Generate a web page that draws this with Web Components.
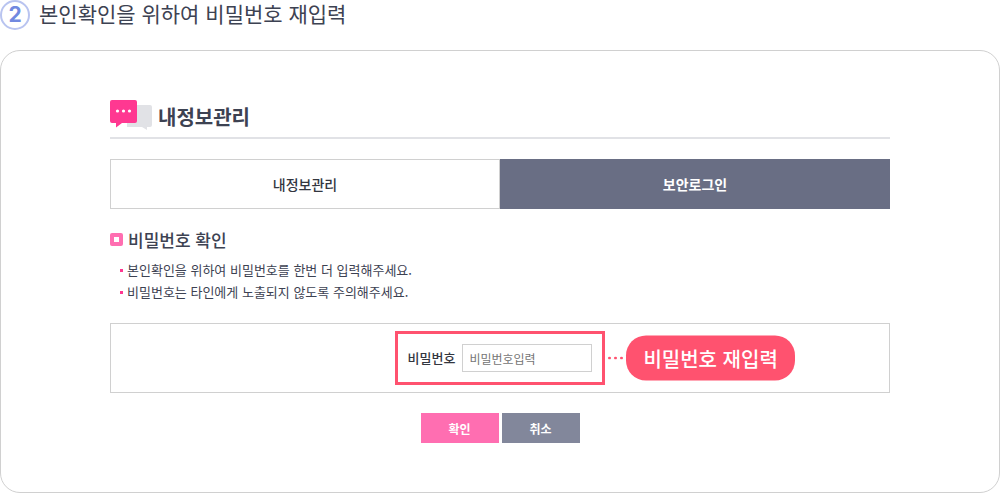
<!DOCTYPE html>
<html lang="ko">
<head>
<meta charset="utf-8">
<meta name="viewport" content="width=device-width, initial-scale=1">
<title>내정보관리</title>
<style>
  body {
    margin: 0;
    background: #fff;
    color: #3d4252;
    font-family: "Noto Sans CJK KR", "Noto Sans", sans-serif;
    font-size: 13px;
  }
</style>
</head>
<body>

<guide-step number="2">
  <span slot="title">본인확인을 위하여 비밀번호 재입력</span>
  <page-title>내정보관리</page-title>
  <tab-menu>
    <tab-item href="#info">내정보관리</tab-item>
    <tab-item href="#login" active>보안로그인</tab-item>
  </tab-menu>
  <notice-list>
    <span slot="title">비밀번호 확인</span>
    <notice-item>본인확인을 위하여 비밀번호를 한번 더 입력해주세요.</notice-item>
    <notice-item>비밀번호는 타인에게 노출되지 않도록 주의해주세요.</notice-item>
  </notice-list>
  <password-form></password-form>
</guide-step>

<script>
  // Base class: clones the template markup into an open shadow root
  class BaseElement extends HTMLElement {
    constructor() {
      super();
      this.attachShadow({ mode: 'open' });
    }

    connectedCallback() {
      this.shadowRoot.innerHTML = this.template();
    }
  }

  /**
   * <guide-step number="2"> : numbered heading + rounded panel
   */
  class GuideStep extends BaseElement {
    template() {
      return `
        <style>
          :host {
            display: block;
          }

          .step-header {
            display: flex;
            align-items: flex-start;
            gap: 9px;
            margin-bottom: 20px;
          }

          .step-number {
            box-sizing: border-box;
            width: 30px;
            height: 30px;
            border: 2px solid #b9c4f0;
            border-radius: 50%;
            color: #7189e0;
            font: bold 21px/26px Inter, sans-serif;
            text-align: center;
          }

          h1 {
            margin: 0;
            font-size: 21px;
            font-weight: 400;
            line-height: 26px;
          }

          .panel {
            padding: 49px 109px;
            border: 1px solid #d0d0d0;
            border-radius: 20px;
          }
        </style>

        <header class="step-header">
          <span class="step-number">${this.getAttribute('number')}</span>
          <h1><slot name="title"></slot></h1>
        </header>
        <main class="panel"><slot></slot></main>
      `;
    }
  }

  /**
   * <page-title> : speech bubble icon, title and underline
   */
  class PageTitle extends BaseElement {
    template() {
      return `
        <style>
          :host {
            display: block;
            margin-bottom: 20px;
            border-bottom: 2px solid #e1e2e6;
          }

          h2 {
            display: flex;
            align-items: center;
            gap: 6px;
            margin: 0;
            padding-bottom: 3px;
            font-size: 20px;
            font-weight: 700;
            line-height: 34px;
          }

          svg {
            align-self: flex-start;
            flex: none;
          }
        </style>

        <h2>
          <svg width="42" height="30" viewBox="0 0 42 30" aria-hidden="true">
            <path fill="#e1e2e6" d="M17 5h23a2 2 0 0 1 2 2v18a2 2 0 0 1-2 2h-3v3l-5-3H17z"/>
            <path fill="#ff3891" d="M2 0h23a2 2 0 0 1 2 2v19a2 2 0 0 1-2 2H12l-6 4.500V23H2a2 2 0 0 1-2-2V2a2 2 0 0 1 2-2z"/>
            <g fill="#fff">
              <circle cx="7.500" cy="11" r="1.600"/>
              <circle cx="13.500" cy="11" r="1.600"/>
              <circle cx="19.500" cy="11" r="1.600"/>
            </g>
          </svg>
          <slot></slot>
        </h2>
      `;
    }
  }

  class TabMenu extends BaseElement {
    template() {
      return `
        <style>
          :host {
            display: block;
            margin-bottom: 19px;
          }

          nav {
            display: flex;
          }
        </style>

        <nav><slot></slot></nav>
      `;
    }
  }

  class TabItem extends BaseElement {
    template() {
      return `
        <style>
          :host {
            flex: 1;
          }

          a {
            display: block;
            border: 1px solid #d0d0d0;
            color: #33363f;
            font-size: 14px;
            font-weight: 500;
            line-height: 48px;
            text-align: center;
            text-decoration: none;
          }

          :host([active]) a {
            border-color: #696e84;
            background: #696e84;
            color: #fff;
            font-weight: 700;
          }
        </style>

        <a href="${this.getAttribute('href')}"><slot></slot></a>
      `;
    }
  }

  /**
   * <notice-list> : section title followed by bullet notices
   */
  class NoticeList extends BaseElement {
    template() {
      return `
        <style>
          :host {
            display: block;
            margin-bottom: 20px;
          }

          h3 {
            display: flex;
            align-items: center;
            gap: 5px;
            margin: 0 0 8px;
            font-size: 17px;
            font-weight: 500;
            line-height: 23px;
          }

          h3::before {
            content: "";
            box-sizing: border-box;
            width: 13px;
            height: 13px;
            border: 4px solid #ff6eb1;
            border-radius: 2px;
          }

          .notices {
            padding-left: 10px;
          }
        </style>

        <h3><slot name="title"></slot></h3>
        <div class="notices" role="list"><slot></slot></div>
      `;
    }
  }

  class NoticeItem extends BaseElement {
    connectedCallback() {
      super.connectedCallback();
      this.setAttribute('role', 'listitem');
    }

    template() {
      return `
        <style>
          :host {
            display: flex;
            align-items: center;
            gap: 4px;
            line-height: 22px;
          }

          :host::before {
            content: "";
            flex: none;
            width: 3px;
            height: 3px;
            background: #ff3891;
          }
        </style>

        <span><slot></slot></span>
      `;
    }
  }

  /**
   * <call-out> : dotted leader and pill label, placed beside its parent
   */
  class CallOut extends BaseElement {
    template() {
      return `
        <style>
          :host {
            display: flex;
            align-items: center;
            gap: 3px;
            white-space: nowrap;
          }

          .pill {
            padding: 0 17px;
            border-radius: 20px;
            background: #ff526f;
            color: #fff;
            font-size: 20px;
            font-weight: 500;
            line-height: 45px;
          }
        </style>

        <svg width="15" height="3" viewBox="0 0 15 3" fill="#ff526f" aria-hidden="true">
          <circle cx="1.500" cy="1.500" r="1.500"/>
          <circle cx="7.500" cy="1.500" r="1.500"/>
          <circle cx="13.500" cy="1.500" r="1.500"/>
        </svg>
        <span class="pill"><slot></slot></span>
      `;
    }
  }

  /**
   * <password-form>
   *
   * Événement émis :
   *   - password-submit: { password }
   */
  class PasswordForm extends BaseElement {
    connectedCallback() {
      super.connectedCallback();
      this._setupEventListeners();
    }

    template() {
      return `
        <style>
          :host {
            display: block;
          }

          form {
            display: flex;
            flex-direction: column;
            gap: 20px;
          }

          .field-box {
            display: flex;
            justify-content: center;
            padding: 7px;
            border: 1px solid #d0d0d0;
          }

          .highlight {
            position: relative;
            display: flex;
            align-items: center;
            gap: 7px;
            padding: 10px;
            border: 3px solid #ff526f;
          }

          label {
            padding-bottom: 2px;
            color: #33363f;
            font-weight: 500;
          }

          input {
            box-sizing: border-box;
            width: 130px;
            height: 28px;
            padding: 0 6px;
            border: 1px solid #d0d0d0;
            border-radius: 0;
            background: #fff;
            color: inherit;
            font-family: inherit;
            font-size: 12px;
          }

          input::placeholder {
            color: #757575;
          }

          call-out {
            position: absolute;
            top: 50%;
            left: 100%;
            margin-left: 6px;
            transform: translateY(-50%);
          }

          .actions {
            display: flex;
            justify-content: center;
            gap: 3px;
          }

          button {
            min-width: 78px;
            height: 30px;
            padding: 0 12px;
            border: 0;
            background: #82879b;
            color: #fff;
            font-family: inherit;
            font-size: 12px;
            font-weight: 700;
            cursor: pointer;
          }

          button.confirm {
            background: #ff6eb1;
          }
        </style>

        <form>
          <div class="field-box">
            <div class="highlight">
              <label for="password">비밀번호</label>
              <input type="password" id="password" placeholder="비밀번호입력">
              <call-out>비밀번호 재입력</call-out>
            </div>
          </div>
          <div class="actions">
            <button type="submit" class="confirm">확인</button>
            <button type="reset">취소</button>
          </div>
        </form>
      `;
    }

    _setupEventListeners() {
      const form = this.shadowRoot.querySelector('form');
      const input = this.shadowRoot.getElementById('password');

      form.addEventListener('submit', (e) => {
        e.preventDefault();
        this.dispatchEvent(new CustomEvent('password-submit', {
          bubbles: true,
          composed: true,
          detail: { password: input.value }
        }));
      });
    }
  }

  customElements.define('guide-step', GuideStep);
  customElements.define('page-title', PageTitle);
  customElements.define('tab-menu', TabMenu);
  customElements.define('tab-item', TabItem);
  customElements.define('notice-list', NoticeList);
  customElements.define('notice-item', NoticeItem);
  customElements.define('call-out', CallOut);
  customElements.define('password-form', PasswordForm);
</script>
</body>
</html>
